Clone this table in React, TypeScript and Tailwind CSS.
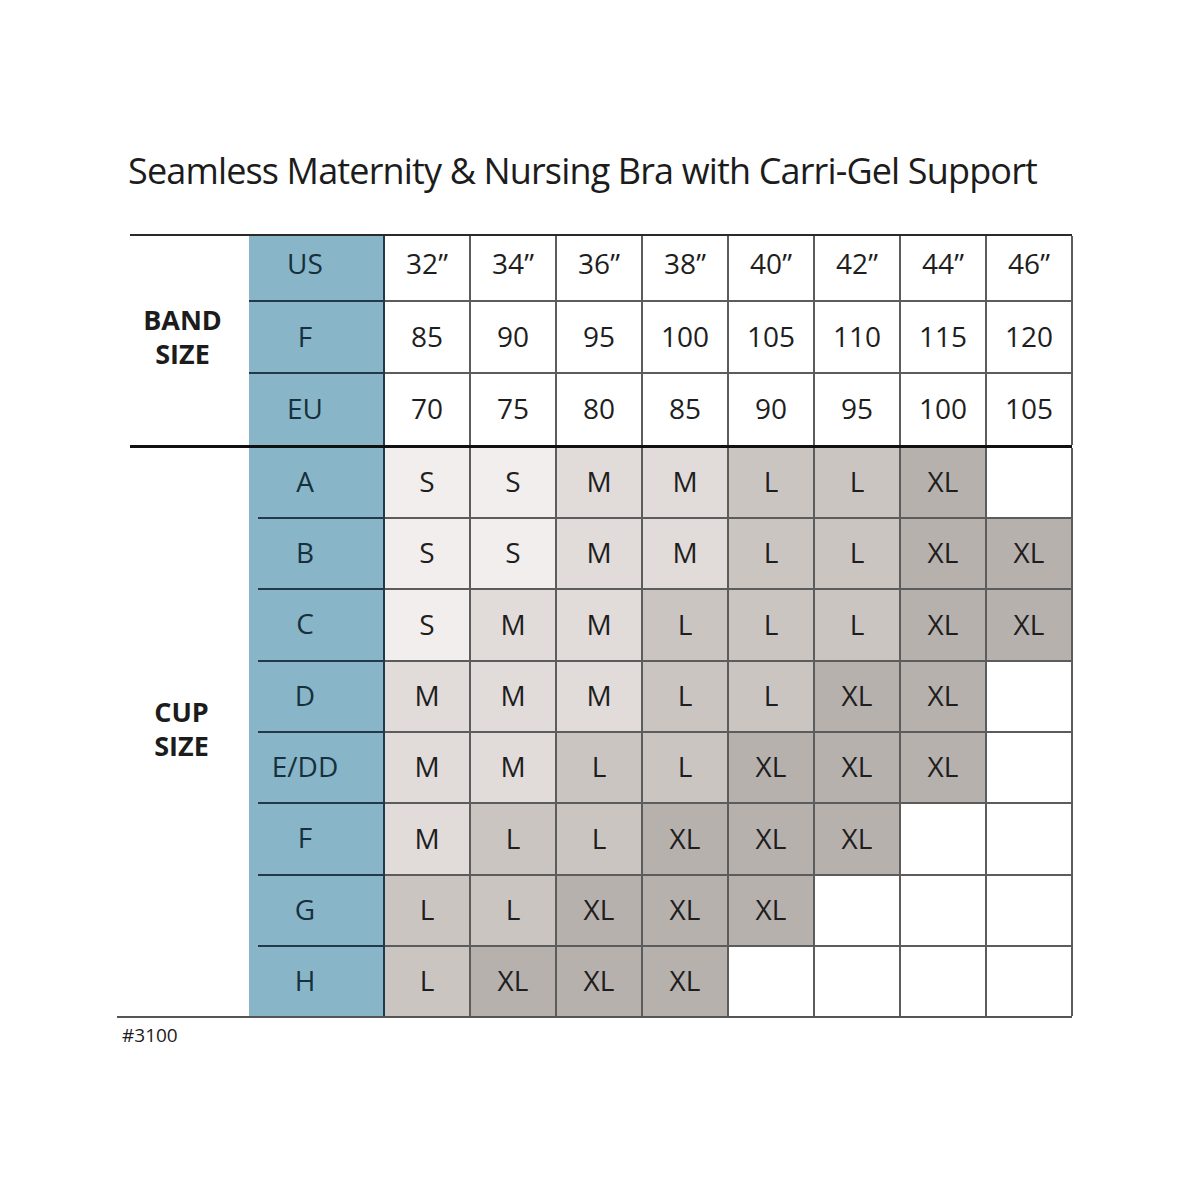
const bandRows = [
  { label: "US", cells: ["32”", "34”", "36”", "38”", "40”", "42”", "44”", "46”"] },
  { label: "F", cells: ["85", "90", "95", "100", "105", "110", "115", "120"] },
  { label: "EU", cells: ["70", "75", "80", "85", "90", "95", "100", "105"] },
]

const cupRows = [
  { label: "A", cells: ["S", "S", "M", "M", "L", "L", "XL", ""] },
  { label: "B", cells: ["S", "S", "M", "M", "L", "L", "XL", "XL"] },
  { label: "C", cells: ["S", "M", "M", "L", "L", "L", "XL", "XL"] },
  { label: "D", cells: ["M", "M", "M", "L", "L", "XL", "XL", ""] },
  { label: "E/DD", cells: ["M", "M", "L", "L", "XL", "XL", "XL", ""] },
  { label: "F", cells: ["M", "L", "L", "XL", "XL", "XL", "", ""] },
  { label: "G", cells: ["L", "L", "XL", "XL", "XL", "", "", ""] },
  { label: "H", cells: ["L", "XL", "XL", "XL", "", "", "", ""] },
]

const shade: Record<string, string> = {
  S: "bg-[#f2eeed]",
  M: "bg-[#e1dbd9]",
  L: "bg-[#cbc5c2]",
  XL: "bg-[#b7b1ae]",
  "": "bg-white",
}

function DataCell({ value, noBottom, header }: { value: string; noBottom?: boolean; header?: boolean }) {
  return (
    <div
      className={`flex items-center justify-center text-[28px] text-[#1e1e1e] border-r-2 border-[#5c5c5c] ${
        noBottom ? "" : "border-b-2"
      } ${header ? "pb-[10px]" : "pb-[3px]"} ${shade[value] ?? "bg-white"}`}
    >
      {value}
    </div>
  )
}

export default function App() {
  return (
    <div
      className="w-[1200px] h-[1200px] bg-white flex flex-col pl-[117px]"
      style={{ fontFamily: '"Open Sans", "Liberation Sans", sans-serif' }}
    >
      {/* Title */}
      <h1 className="mt-[146px] ml-[11px] text-[36px] leading-[50px] text-[#1c1c1c] tracking-[-0.85px]">
        Seamless Maternity &amp; Nursing Bra with Carri-Gel Support
      </h1>

      {/* Table */}
      <div className="mt-[38px] ml-[13px] w-[942px] border-t-2 border-[#2a2a2a]">
        {/* Band size section */}
        <div className="grid grid-cols-[119px_136px_repeat(8,86px)] grid-rows-[66px_72px_71px]">
          <div className="row-span-3 col-start-1 row-start-1 flex items-center justify-center pr-[14px] pb-[8px] text-[27px] leading-[34px] font-bold text-[#1c1c1c] text-center">
            BAND
            <br />
            SIZE
          </div>
          {bandRows.map((row, ri) => (
            <div key={row.label} className="contents">
              <div
                className={`col-start-2 bg-[#88b6c8] border-r-2 border-[#22394a] flex items-center justify-center pr-[22px] text-[28px] text-[#17303d] ${
                  ri < 2 ? "border-b-2" : ""
                } ${ri === 0 ? "pb-[10px]" : "pb-[3px]"}`}
              >
                {row.label}
              </div>
              {row.cells.map((c, ci) => (
                <DataCell key={ci} value={c} noBottom={ri === 2} header={ri === 0} />
              ))}
            </div>
          ))}
        </div>

        {/* Thick divider */}
        <div className="h-[3px] bg-[#111]" />

        {/* Cup size section */}
        <div className="grid grid-cols-[119px_136px_repeat(8,86px)] grid-rows-[71px_71px_72px_71px_71px_72px_71px_69px]">
          <div className="row-span-8 col-start-1 row-start-1 flex items-center justify-center pr-[16px] pb-[6px] text-[27px] leading-[34px] font-bold text-[#1c1c1c] text-center">
            CUP
            <br />
            SIZE
          </div>
          {cupRows.map((row, ri) => (
            <div key={row.label} className="contents">
              <div className="col-start-2 bg-[#88b6c8] border-r-2 border-[#22394a] flex flex-col">
                <div className="flex-1 flex items-center justify-center pr-[22px] pb-[4px] text-[28px] text-[#17303d]">
                  {row.label}
                </div>
                {ri < 7 && <div className="ml-[9px] h-[2px] bg-[#22394a]" />}
              </div>
              {row.cells.map((c, ci) => (
                <DataCell key={ci} value={c} noBottom={ri === 7} />
              ))}
            </div>
          ))}
        </div>
      </div>

      {/* Bottom rule + code */}
      <div className="w-[955px] h-[2px] bg-[#555]" />
      <div className="mt-[3px] ml-[5px] text-[19px] text-[#1c1c1c]">#3100</div>
    </div>
  )
}
